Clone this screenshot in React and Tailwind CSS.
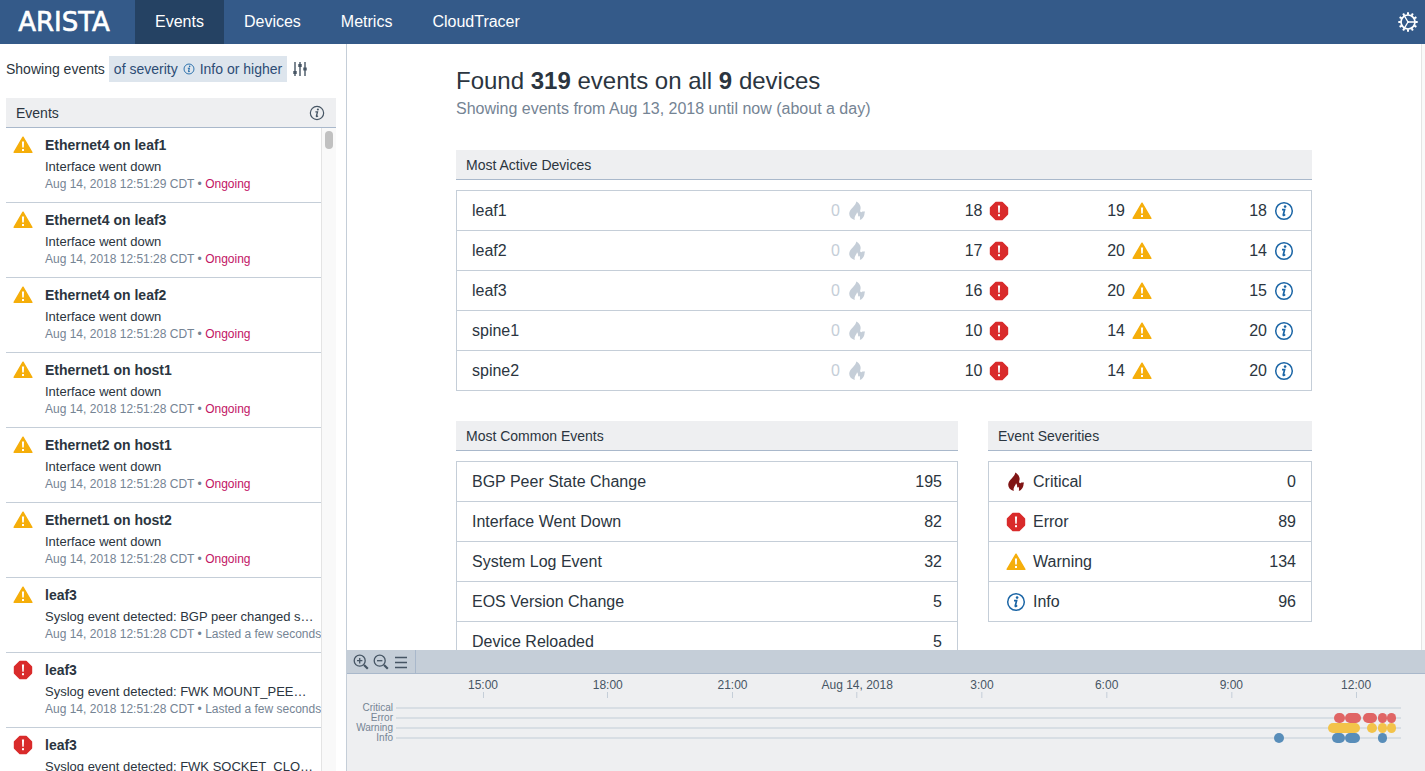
import { useState } from "react";

const SEVERITIES = ["critical", "error", "warning", "info"];
const LABELS = { critical: "Critical", error: "Error", warning: "Warning", info: "Info" };

function FlameIcon({ className }) {
  return (
    <svg viewBox="0 0 20 20" className={className} fill="currentColor" aria-hidden="true">
      <path d="M9.300.5C12 1.900 14 4.600 13.600 7.600c-.2 1.200-.8 2.400-.2 3.200.5.700 1.500.5 1.900-.3l2.700-.1c-.5.900-.4 1.900-.6 3-.4 2.600-2 4.500-4.600 5.600.5-1.800.2-3.300-.5-4.200-.3.500-.7.700-1.200.7.200-1.800-.1-3.200-1.100-4.200-.3 1.700-1.200 2.500-1.800 3.600-.7 1.300-.8 2.600-.4 4C4.400 18 2.200 15.700 2.200 12.700c0-2.600 1.700-4.500 3.700-6.500C7.600 4.400 9.100 2.800 9.300.5z" />
    </svg>
  );
}

function ErrorIcon({ className }) {
  return (
    <svg viewBox="0 0 20 20" className={className} aria-hidden="true">
      <path d="M6.900 1.600h6.200l5.300 5.300v6.200l-5.300 5.300H6.900l-5.300-5.300V6.900z" fill="#d92b2b" stroke="#d92b2b" strokeWidth="1.600" strokeLinejoin="round" />
      <path d="M8.900 4.600h2.200l-.4 7.200H9.300z" fill="#fff" />
      <rect x="9" y="13.200" width="2" height="2" fill="#fff" />
    </svg>
  );
}

function WarningIcon({ className }) {
  return (
    <svg viewBox="0 0 20 20" className={className} aria-hidden="true">
      <path d="M10 2.200 18.900 17.300H1.100z" fill="#f5ae0b" stroke="#f5ae0b" strokeWidth="1.400" strokeLinejoin="round" />
      <path d="M8.900 6.600h2.200l-.3 6H9.200z" fill="#fff" />
      <rect x="9" y="14" width="2" height="2" fill="#fff" />
    </svg>
  );
}

function InfoIcon({ className }) {
  return (
    <svg viewBox="0 0 20 20" className={className} aria-hidden="true">
      <circle cx="10" cy="10" r="8.300" fill="none" stroke="currentColor" strokeWidth="1.500" />
      <circle cx="11.100" cy="5.600" r="1.300" fill="currentColor" />
      <path d="M8 8.600h2.600l-1.300 5.100c-.2.900.6 1 1.800-.3" fill="none" stroke="currentColor" strokeWidth="1.700" />
    </svg>
  );
}

function SeverityIcon({ severity, muted }) {
  if (severity === "critical")
    return <FlameIcon className={muted ? "size-5 shrink-0 text-[#c5ced8]" : "size-5 shrink-0 text-[#801515]"} />;
  if (severity === "error") return <ErrorIcon className="size-5 shrink-0" />;
  if (severity === "warning") return <WarningIcon className="size-5 shrink-0" />;
  return <InfoIcon className="size-5 shrink-0 text-[#1c66a6]" />;
}

function GearIcon() {
  const teeth = Array.from({ length: 12 }, (_, i) => i * 30);
  return (
    <svg viewBox="0 0 20 20" className="size-5" fill="none" stroke="currentColor" aria-hidden="true">
      <circle cx="10" cy="10" r="7" strokeWidth="1.700" />
      {teeth.map((a) => (
        <path key={a} d="M10 .3v2.500" strokeWidth="2" transform={`rotate(${a} 10 10)`} />
      ))}
      <path d="M10 10h6.500M10 10 6.700 4.300M10 10l-3.300 5.700" strokeWidth="1.300" />
      <circle cx="10" cy="10" r="1" fill="currentColor" stroke="none" />
    </svg>
  );
}

function SlidersIcon() {
  return (
    <svg viewBox="0 0 16 16" className="size-4" stroke="currentColor" strokeWidth="1.400" aria-hidden="true">
      <path d="M3 1v14M8 1v14M13 1v14" />
      <path d="M3 10v3M8 3v3M13 6.500v3" strokeWidth="3.400" />
    </svg>
  );
}

function ZoomIcon({ plus }) {
  return (
    <svg viewBox="0 0 16 16" className="size-4" fill="none" stroke="currentColor" strokeWidth="1.300" aria-hidden="true">
      <circle cx="6.700" cy="6.700" r="5.500" />
      <path d={plus ? "M4 6.700h5.400M6.700 4v5.400" : "M4 6.700h5.400"} />
      <path d="m11 11 3.800 3.800" strokeWidth="2.200" />
    </svg>
  );
}

function MenuIcon() {
  return (
    <svg viewBox="0 0 16 16" className="size-4" stroke="currentColor" strokeWidth="1.300" aria-hidden="true">
      <path d="M2 3.500h12M2 8.500h12M2 13.500h12" />
    </svg>
  );
}

const EVENTS = [
  ["warning", "Ethernet4 on leaf1", "Interface went down", "12:51:29", "Ongoing"],
  ["warning", "Ethernet4 on leaf3", "Interface went down", "12:51:28", "Ongoing"],
  ["warning", "Ethernet4 on leaf2", "Interface went down", "12:51:28", "Ongoing"],
  ["warning", "Ethernet1 on host1", "Interface went down", "12:51:28", "Ongoing"],
  ["warning", "Ethernet2 on host1", "Interface went down", "12:51:28", "Ongoing"],
  ["warning", "Ethernet1 on host2", "Interface went down", "12:51:28", "Ongoing"],
  ["warning", "leaf3", "Syslog event detected: BGP peer changed s…", "12:51:28", "Lasted a few seconds"],
  ["error", "leaf3", "Syslog event detected: FWK MOUNT_PEE…", "12:51:28", "Lasted a few seconds"],
  ["error", "leaf3", "Syslog event detected: FWK SOCKET_CLO…", "12:51:28", "Lasted a few seconds"],
];

const DEVICES = [
  ["leaf1", 0, 18, 19, 18],
  ["leaf2", 0, 17, 20, 14],
  ["leaf3", 0, 16, 20, 15],
  ["spine1", 0, 10, 14, 20],
  ["spine2", 0, 10, 14, 20],
];

const COMMON = [
  ["BGP Peer State Change", 195],
  ["Interface Went Down", 82],
  ["System Log Event", 32],
  ["EOS Version Change", 5],
  ["Device Reloaded", 5],
];

const TOTALS = [
  ["critical", 0],
  ["error", 89],
  ["warning", 134],
  ["info", 96],
];

// Positions along the time axis are percentages of the track width.
const TICKS = ["15:00", "18:00", "21:00", "Aug 14, 2018", "3:00", "6:00", "9:00", "12:00"].map((label, i) => ({
  label,
  at: 8.66 + i * 12.41,
}));

const TRACKS = {
  critical: [],
  error: [[93.3, 94.4], [94.4, 96], [96.2, 97.6], [97.7, 98.6], [98.6, 99.5]],
  warning: [[92.7, 95.9], [96.6, 97.6], [97.7, 98.6], [98.6, 99.5]],
  info: [[87.4, 88.4], [93.1, 94.4], [94.4, 95.9], [97.7, 98.6]],
};

const MARK = {
  critical: "bg-[#801515]",
  error: "bg-[#e06565]",
  warning: "bg-[#f3c34a]",
  info: "bg-[#588db9]",
};

function Header() {
  const [active, setActive] = useState("Events");
  return (
    <header className="flex h-11 shrink-0 items-stretch bg-[#345a89] text-base text-white">
      <a href="#home" className="flex w-[135px] items-center pl-[13px]" aria-label="ARISTA">
        <svg viewBox="0 0 102 20" className="h-5 w-[102px] overflow-visible" fill="currentColor" stroke="currentColor" strokeWidth="0.600" aria-hidden="true">
          <text x="51" y="19" textAnchor="middle" fontFamily="DejaVu Sans, sans-serif" fontSize="26">ARISTA</text>
        </svg>
      </a>
      <nav className="flex grow">
        {["Events", "Devices", "Metrics", "CloudTracer"].map((name) => (
          <a
            key={name}
            href={`#${name.toLowerCase()}`}
            onClick={() => setActive(name)}
            className={name === active ? "flex items-center bg-[#254263] px-5" : "flex items-center px-5"}
          >
            {name}
          </a>
        ))}
      </nav>
      <button type="button" aria-label="Settings" className="flex items-center pr-[7px]">
        <GearIcon />
      </button>
    </header>
  );
}

function Sidebar() {
  return (
    <aside className="flex w-[347px] shrink-0 flex-col border-r border-[#c5ced8] pl-1.5 pr-2.5">
      <div className="flex h-[50px] shrink-0 items-center text-sm">
        <span>Showing events</span>
        <button type="button" className="ml-1 flex h-[26px] items-center gap-[5px] bg-[#dde5ed] px-[5px] whitespace-nowrap text-[#2c4c75]">
          of severity
          <InfoIcon className="size-3 text-[#1c66a6]" />
          Info or higher
        </button>
        <button type="button" aria-label="Filters" className="ml-[5px] text-[#465564]">
          <SlidersIcon />
        </button>
      </div>
      <div className="mt-1 flex h-[30px] shrink-0 items-center justify-between border-b border-[#a9b8cb] bg-[#eeeff1] pr-[11px] pl-2.5 text-sm">
        <h2>Events</h2>
        <button type="button" aria-label="About events" className="text-[#465564]">
          <InfoIcon className="size-4" />
        </button>
      </div>
      <div className="flex min-h-0 grow">
        <ul className="min-w-0 grow overflow-hidden">
          {EVENTS.map(([severity, title, text, time, status], i) => (
            <li key={i} className="flex h-[75px] border-b border-[#c5ced8] pt-[7px] pl-[7px]">
              <SeverityIcon severity={severity} />
              <div className="ml-3 min-w-0 whitespace-nowrap">
                <h3 className="text-sm font-bold">{title}</h3>
                <p className="mt-0.5 text-[13px] leading-5">{text}</p>
                <p className="text-xs leading-[14px] text-[#758494]">
                  Aug 14, 2018 {time} CDT •{" "}
                  <span className={status === "Ongoing" ? "text-[#c21464]" : ""}>{status}</span>
                </p>
              </div>
            </li>
          ))}
        </ul>
        <div className="w-[15px] shrink-0 border-l border-[#e4e4e4] bg-[#f9f9f9] px-[3px] pt-[3px]">
          <div className="h-[18px] w-2 rounded-full bg-[#c1c1c1]" />
        </div>
      </div>
    </aside>
  );
}

function SectionTitle({ children }) {
  return (
    <h2 className="flex h-[30px] items-center border-b border-[#a9b8cb] bg-[#eeeff1] px-2.5 text-sm">{children}</h2>
  );
}

function Summary() {
  return (
    <main className="flex min-h-0 grow overflow-hidden">
      <div className="min-w-0 grow">
        <div className="mx-auto max-w-[856px] pt-[21px]">
          <h1 className="text-2xl">
            Found <b>319</b> events on all <b>9</b> devices
          </h1>
          <p className="text-base text-[#758494]">Showing events from Aug 13, 2018 until now (about a day)</p>

          <section className="mt-[29px]">
            <SectionTitle>Most Active Devices</SectionTitle>
            <table className="mt-2.5 w-full table-fixed border-collapse border border-[#c5ced8]">
              <tbody>
                {DEVICES.map(([name, ...counts]) => (
                  <tr key={name} className="h-10 border-b border-[#c5ced8]">
                    <th scope="row" className="w-1/3 pl-[15px] text-left font-normal">{name}</th>
                    {counts.map((count, i) => (
                      <td key={i} className="pr-[17px]">
                        <div className={count ? "flex items-center justify-end gap-[7px]" : "flex items-center justify-end gap-[7px] text-[#c5ced8]"}>
                          {count}
                          <SeverityIcon severity={SEVERITIES[i]} muted={!count} />
                        </div>
                      </td>
                    ))}
                  </tr>
                ))}
              </tbody>
            </table>
          </section>

          <div className="mt-[30px] grid grid-cols-[502fr_324fr] items-start gap-[30px]">
            <section>
              <SectionTitle>Most Common Events</SectionTitle>
              <table className="mt-2.5 w-full border-collapse border border-[#c5ced8]">
                <tbody>
                  {COMMON.map(([name, count]) => (
                    <tr key={name} className="h-10 border-b border-[#c5ced8]">
                      <th scope="row" className="pl-[15px] text-left font-normal">{name}</th>
                      <td className="pr-[15px] text-right">{count}</td>
                    </tr>
                  ))}
                </tbody>
              </table>
            </section>
            <section>
              <SectionTitle>Event Severities</SectionTitle>
              <table className="mt-2.5 w-full border-collapse border border-[#c5ced8]">
                <tbody>
                  {TOTALS.map(([severity, count]) => (
                    <tr key={severity} className="h-10 border-b border-[#c5ced8]">
                      <th scope="row" className="pl-[17px] text-left font-normal">
                        <div className="flex items-center gap-[7px]">
                          <SeverityIcon severity={severity} />
                          {LABELS[severity]}
                        </div>
                      </th>
                      <td className="pr-[15px] text-right">{count}</td>
                    </tr>
                  ))}
                </tbody>
              </table>
            </section>
          </div>
        </div>
      </div>
      <div className="w-1 shrink-0 border-l border-[#e4e4e4] bg-[#f9f9f9]" />
    </main>
  );
}

function Timeline() {
  return (
    <footer className="flex h-[121px] shrink-0 flex-col bg-[#eeeff1]">
      <div className="flex h-6 shrink-0 border-b border-[#a9b8cb] bg-[#c5ced8] text-[#465564]">
        <div className="flex items-center gap-1 border-r border-[#a9b8cb] pr-1.5 pl-1.5">
          <button type="button" aria-label="Zoom in"><ZoomIcon plus /></button>
          <button type="button" aria-label="Zoom out"><ZoomIcon /></button>
          <button type="button" aria-label="Timeline menu"><MenuIcon /></button>
        </div>
      </div>
      <div className="pr-6 pl-[49px]">
        <div className="relative h-[29px]">
          {TICKS.map(({ label, at }) => (
            <div
              key={label}
              className="absolute top-1 flex -translate-x-1/2 flex-col items-center text-xs leading-[14px] whitespace-nowrap text-[#465564]"
              style={{ left: `${at}%` }}
            >
              {label}
              <span className="h-1.5 w-px bg-[#c5ced8]" />
            </div>
          ))}
        </div>
      </div>
      <div className="pr-6">
        {SEVERITIES.map((severity) => (
          <div key={severity} className="flex h-2.5 items-center">
            <span className="w-[49px] shrink-0 pr-[3px] text-right text-[10px] leading-[10px] text-[#758494]">
              {LABELS[severity]}
            </span>
            <div className="relative h-0.5 grow bg-[#d8dee4]">
              {TRACKS[severity].map(([from, to]) => (
                <span
                  key={from}
                  className={`absolute -top-1 h-2.5 rounded-full ${MARK[severity]}`}
                  style={{ left: `${from}%`, width: `${to - from}%` }}
                />
              ))}
            </div>
          </div>
        ))}
      </div>
    </footer>
  );
}

export default function App() {
  return (
    <div className="flex h-screen flex-col overflow-hidden bg-white font-['Liberation_Sans',Arial,sans-serif] text-[#2b3540]">
      <Header />
      <div className="flex min-h-0 grow">
        <Sidebar />
        <div className="flex min-w-0 grow flex-col">
          <Summary />
          <Timeline />
        </div>
      </div>
    </div>
  );
}
